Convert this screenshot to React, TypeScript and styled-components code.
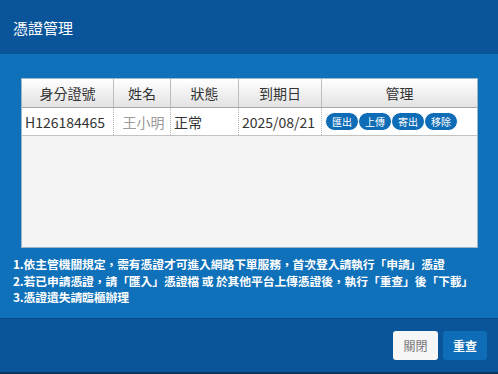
import React from 'react'
import styled, { createGlobalStyle } from 'styled-components'

const Global = createGlobalStyle`
  html, body { margin: 0; padding: 0; background: #0a4f8f; }
  body { font-family: "Noto Sans CJK TC", "Noto Sans", sans-serif; }
`

const Dialog = styled.div`
  width: 498px;
  height: 374px;
  display: flex;
  flex-direction: column;
  border-bottom: 2px solid #07365f;
  box-sizing: border-box;
`

const Header = styled.div`
  height: 54px;
  flex: none;
  background: #0a559a;
  color: #fff;
  display: flex;
  align-items: center;
  padding-left: 13px;
  font-size: 15px;
  box-sizing: border-box;
`

const Body = styled.div`
  height: 264px;
  flex: none;
  background: #0f71ba;
  padding: 24px 20px 0 21px;
  box-sizing: border-box;
`

const Panel = styled.div`
  height: 170px;
  background: #f4f4f4;
  border: 1px solid #9fb6c9;
  box-sizing: border-box;
`

const Table = styled.table`
  width: 100%;
  border-collapse: collapse;
  table-layout: fixed;
`

const Th = styled.th<{ $w?: number }>`
  width: ${p => (p.$w ? `${p.$w}px` : 'auto')};
  height: 28px;
  padding: 0;
  font-weight: normal;
  font-size: 14px;
  color: #333;
  background: linear-gradient(#ffffff, #e2e2e2);
  border-right: 1px solid #bdbdbd;
  border-bottom: 1px solid #a8a8a8;
  &:last-child { border-right: none; }
`

const Td = styled.td<{ $align?: string; $faded?: boolean }>`
  height: 27px;
  padding: 0 0 0 3px;
  font-size: 14px;
  color: ${p => (p.$faded ? '#9a9a9a' : '#333')};
  background: #fff;
  text-align: ${p => p.$align || 'left'};
  border-right: 1px dotted #b8b8b8;
  border-bottom: 1px solid #c4c4c4;
  white-space: nowrap;
  overflow: hidden;
  &:last-child { border-right: none; }
`

const Actions = styled.div`
  display: flex;
`

const Pill = styled.button`
  height: 19px;
  padding: 0 6px;
  border: 1px solid #fff;
  border-radius: 10px;
  background: #0f6cb6;
  color: #fff;
  font-family: inherit;
  font-size: 10px;
  line-height: 17px;
  margin-right: -1px;
`

const Notes = styled.div`
  margin-top: 8px;
  margin-left: -8px;
  color: #fff;
  font-size: 11.8px;
  font-weight: bold;
  line-height: 16.5px;
  letter-spacing: -0.1px;
`

const Footer = styled.div`
  flex: 1;
  background: #0a559a;
  border-top: 1px solid #094a86;
  display: flex;
  justify-content: flex-end;
  align-items: center;
  gap: 5px;
  padding-right: 11px;
`

const FooterButton = styled.button<{ $primary?: boolean }>`
  height: 29px;
  width: ${p => (p.$primary ? '44px' : '45px')};
  border: none;
  border-radius: 3px;
  font-family: inherit;
  font-size: 12px;
  background: ${p => (p.$primary ? '#0f6cb6' : '#f7f7f7')};
  color: ${p => (p.$primary ? '#fff' : '#777')};
  font-weight: ${p => (p.$primary ? 'bold' : 'normal')};
`

const actions = ['匯出', '上傳', '寄出', '移除']

export default function App() {
  return (
    <Dialog>
      <Global />
      <Header>憑證管理</Header>
      <Body>
        <Panel>
          <Table>
            <thead>
              <tr>
                <Th $w={91}>身分證號</Th>
                <Th $w={56}>姓名</Th>
                <Th $w={67}>狀態</Th>
                <Th $w={82}>到期日</Th>
                <Th>管理</Th>
              </tr>
            </thead>
            <tbody>
              <tr>
                <Td>H126184465</Td>
                <Td $faded $align="center">王小明</Td>
                <Td>正常</Td>
                <Td>2025/08/21</Td>
                <Td>
                  <Actions>
                    {actions.map(a => (
                      <Pill key={a}>{a}</Pill>
                    ))}
                  </Actions>
                </Td>
              </tr>
            </tbody>
          </Table>
        </Panel>
        <Notes>
          <div>1.依主管機關規定，需有憑證才可進入網路下單服務，首次登入請執行「申請」憑證</div>
          <div>2.若已申請憑證，請「匯入」憑證檔 或 於其他平台上傳憑證後，執行「重查」後「下載」</div>
          <div>3.憑證遺失請臨櫃辦理</div>
        </Notes>
      </Body>
      <Footer>
        <FooterButton>關閉</FooterButton>
        <FooterButton $primary>重查</FooterButton>
      </Footer>
    </Dialog>
  )
}
